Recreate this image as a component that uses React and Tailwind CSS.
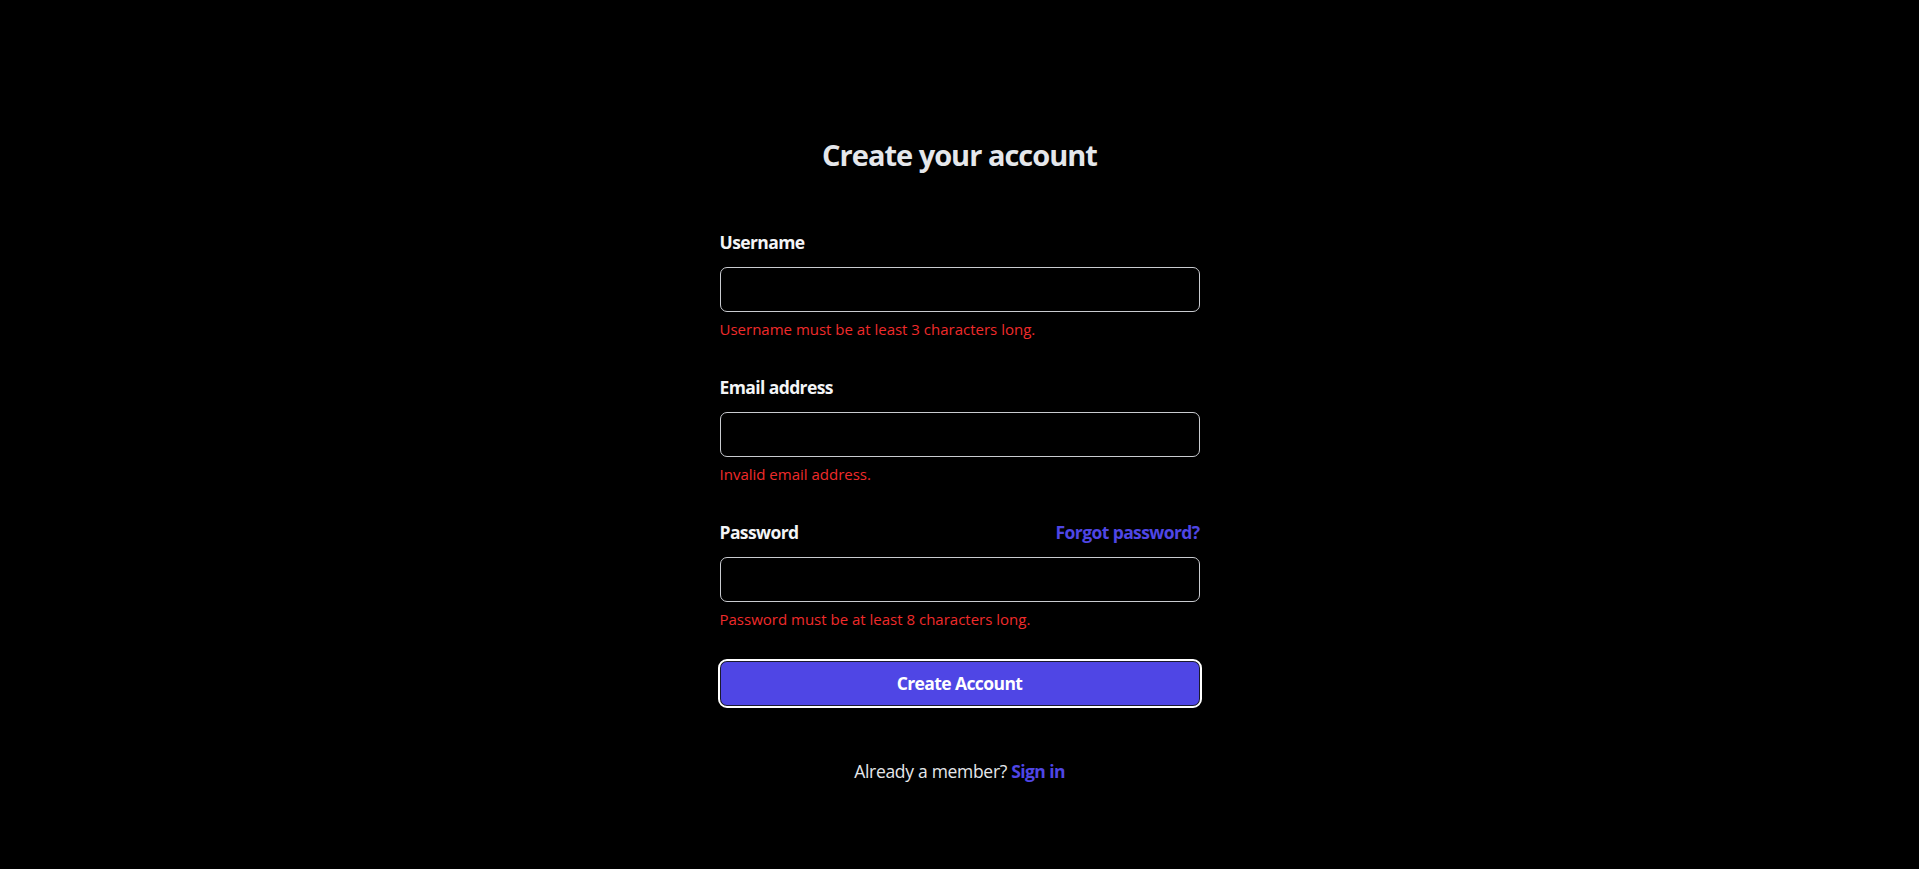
import { useState } from "react";

const Field = ({ label, type, error, right, value, onChange }) => (
  <div>
    <div className="flex items-center justify-between">
      <label className="block text-[17.5px] leading-[30px] font-bold tracking-[-0.6px] text-[#f3f4f6]">
        {label}
      </label>
      {right}
    </div>
    <div className="mt-[10px]">
      <input
        type={type}
        value={value}
        onChange={onChange}
        className="block w-full h-[45px] rounded-[7px] border border-[#c9cbd0] bg-black px-[12px] text-[17.5px] text-white outline-none"
      />
    </div>
    <p className="mt-[7px] text-[15px] leading-[20px] text-[#ef2b2b]">{error}</p>
  </div>
);

export default function App() {
  const [username, setUsername] = useState("");
  const [email, setEmail] = useState("");
  const [password, setPassword] = useState("");

  return (
    <div
      className="min-h-[869px] w-full bg-black flex flex-col items-center pt-[132px]"
      style={{ fontFamily: '"Open Sans", "Noto Sans", sans-serif' }}
    >
      <h2 className="text-center text-[29px] leading-[45px] font-bold tracking-[-1px] text-[#e5e7eb]">
        Create your account
      </h2>

      <form className="mt-[50px] w-[480px]" onSubmit={(e) => e.preventDefault()}>
        <div className="flex flex-col gap-[33px]">
          <Field
            label="Username"
            type="text"
            value={username}
            onChange={(e) => setUsername(e.target.value)}
            error="Username must be at least 3 characters long."
          />
          <Field
            label="Email address"
            type="email"
            value={email}
            onChange={(e) => setEmail(e.target.value)}
            error="Invalid email address."
          />
          <Field
            label="Password"
            type="password"
            value={password}
            onChange={(e) => setPassword(e.target.value)}
            error="Password must be at least 8 characters long."
            right={
              <a
                href="#"
                className="text-[17.5px] leading-[30px] font-bold tracking-[-0.6px] text-[#4f46e5]"
              >
                Forgot password?
              </a>
            }
          />
        </div>

        <button
          type="submit"
          className="mt-[32px] flex h-[45px] w-full items-center justify-center rounded-[7px] border border-[#1a1a2e] bg-[#4f46e5] text-[17.5px] font-bold tracking-[-0.6px] text-white outline-2 outline-white"
        >
          Create Account
        </button>
      </form>

      <p className="mt-[50px] text-center text-[17.5px] leading-[30px] tracking-[-0.3px] text-[#e5e7eb]">
        Already a member?{" "}
        <a href="#" className="font-bold tracking-[-0.6px] text-[#4f46e5]">
          Sign in
        </a>
      </p>
    </div>
  );
}
